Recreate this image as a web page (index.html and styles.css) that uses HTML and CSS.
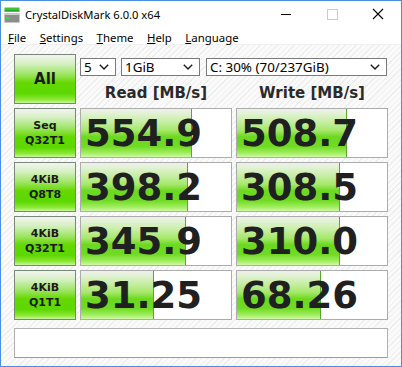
FILE: index.html
```html
<!DOCTYPE html>
<html>
<head>
<meta charset="utf-8">
<link rel="stylesheet" href="styles.css">
</head>
<body>
<div class="window">
  <div class="titlebar">
    <svg class="appicon" width="16" height="16" viewBox="0 0 16 16">
      <rect x="0.5" y="0.5" width="15" height="4" fill="#3ec23e"/>
      <rect x="0.5" y="3.5" width="15" height="1" fill="#1f8a1f"/>
      <rect x="0.5" y="6.5" width="15" height="9" fill="#8a8f8c"/>
      <rect x="0.5" y="6.5" width="15" height="1.5" fill="#c9cccb"/>
      <rect x="2" y="10" width="4" height="2" fill="#46d246"/>
    </svg>
    <span class="title">CrystalDiskMark 6.0.0 x64</span>
    <div class="winctl">
      <svg class="ctl" width="46" height="29" viewBox="0 0 46 29"><rect x="18" y="13" width="10" height="1" fill="#000"/></svg>
      <svg class="ctl" width="46" height="29" viewBox="0 0 46 29"><rect x="18.5" y="8.5" width="10" height="10" fill="none" stroke="#cccccc"/></svg>
      <svg class="ctl" width="46" height="29" viewBox="0 0 46 29"><path d="M18 8 L28 18 M28 8 L18 18" stroke="#000" stroke-width="1.1"/></svg>
    </div>
  </div>
  <div class="menubar">
    <span class="mi"><u>F</u>ile</span>
    <span class="mi"><u>S</u>ettings</span>
    <span class="mi"><u>T</u>heme</span>
    <span class="mi"><u>H</u>elp</span>
    <span class="mi"><u>L</u>anguage</span>
  </div>
  <div class="content">
    <div class="grid">
      <div class="btn all">All</div>
      <div class="controls">
        <div class="combos">
          <div class="combo c1"><span>5</span><svg width="10" height="6" viewBox="0 0 10 6"><path d="M0.8 0.8 L5 5 L9.2 0.8" fill="none" stroke="#1a1a1a" stroke-width="1.4"/></svg></div>
          <div class="combo c2"><span>1GiB</span><svg width="10" height="6" viewBox="0 0 10 6"><path d="M0.8 0.8 L5 5 L9.2 0.8" fill="none" stroke="#1a1a1a" stroke-width="1.4"/></svg></div>
          <div class="combo c3"><span>C: 30% (70/237GiB)</span><svg width="10" height="6" viewBox="0 0 10 6"><path d="M0.8 0.8 L5 5 L9.2 0.8" fill="none" stroke="#1a1a1a" stroke-width="1.4"/></svg></div>
        </div>
        <div class="heads">
          <div class="head">Read [MB/s]</div>
          <div class="head">Write [MB/s]</div>
        </div>
      </div>

      <div class="btn lbl">Seq<br>Q32T1</div>
      <div class="cell"><div class="bar" style="width:111px"></div><span class="num">554.9</span></div>
      <div class="cell"><div class="bar" style="width:110px"></div><span class="num">508.7</span></div>

      <div class="btn lbl">4KiB<br>Q8T8</div>
      <div class="cell"><div class="bar" style="width:107px"></div><span class="num">398.2</span></div>
      <div class="cell"><div class="bar" style="width:103px"></div><span class="num">308.5</span></div>

      <div class="btn lbl">4KiB<br>Q32T1</div>
      <div class="cell"><div class="bar" style="width:105px"></div><span class="num">345.9</span></div>
      <div class="cell"><div class="bar" style="width:103px"></div><span class="num">310.0</span></div>

      <div class="btn lbl">4KiB<br>Q1T1</div>
      <div class="cell"><div class="bar" style="width:73px"></div><span class="num">31.25</span></div>
      <div class="cell"><div class="bar" style="width:84px"></div><span class="num">68.26</span></div>
    </div>
    <div class="comment"></div>
  </div>
</div>
</body>
</html>
```

FILE: styles.css
```css
* { box-sizing: border-box; }
html, body { margin: 0; padding: 0; }
body { width: 402px; height: 367px; overflow: hidden; background: #fff; }

.window {
  width: 402px;
  height: 367px;
  border: 1px solid #4a90e2;
  display: flex;
  flex-direction: column;
  background: #fff;
}

.titlebar {
  height: 29px;
  display: flex;
  align-items: center;
  background: #fff;
  font-family: "Noto Sans", sans-serif;
  font-size: 11.2px;
  color: #000;
}
.appicon { margin-left: 3px; margin-top: -1px; }
.title { margin-left: 5px; margin-top: -2px; }
.winctl { margin-left: auto; display: flex; align-self: flex-start; }
.ctl { display: block; }

.menubar {
  height: 15px;
  display: flex;
  align-items: center;
  gap: 13.5px;
  padding-left: 7px;
  font-family: "Noto Sans", sans-serif;
  font-size: 11.4px;
  color: #000;
  background: #fff;
  border-bottom: 1px solid #f0f0f0;
}
.mi u { text-decoration: underline; text-underline-offset: 1px; }

.content {
  flex: 1;
  padding: 9px 13px 7px 13px;
  background-color: #fafafa;
  background-image: repeating-linear-gradient(135deg, #fafafa 0px, #fafafa 3px, #eeeeee 3px, #eeeeee 4px);
  display: flex;
  flex-direction: column;
  gap: 8px;
}

.grid {
  display: grid;
  grid-template-columns: 62px 152px 152px;
  grid-auto-rows: 50px;
  column-gap: 4px;
  row-gap: 4px;
}

.btn {
  border: 1px solid #788878;
  background: linear-gradient(to bottom, #f2f4f0 0%, #d6f0c2 18%, #98e45a 42%, #64d800 58%, #5cd800 80%, #8ee838 93%, #c8f8a0 100%);
  display: flex;
  align-items: center;
  justify-content: center;
  text-align: center;
  font-family: "DejaVu Sans", sans-serif;
  font-weight: bold;
  color: #1a1a1a;
}
.all { font-size: 15px; }
.lbl { font-size: 11px; line-height: 15px; }

.controls { grid-column: 2 / span 2; display: flex; flex-direction: column; }
.combos { display: flex; margin-top: 4px; height: 18px; }
.combo {
  height: 18px;
  border: 1px solid #7a7a7a;
  background: #fff;
  display: flex;
  align-items: center;
  justify-content: space-between;
  padding: 0 6px 0 3px;
  font-family: "Noto Sans", sans-serif;
  font-size: 13.4px;
  color: #000;
}
.c1 { width: 36px; }
.c2 { width: 79px; margin-left: 5px; }
.c3 { width: 181px; margin-left: 6px; }
.combo svg { display: block; }

.heads { display: flex; gap: 4px; margin-top: 7px; }
.head {
  width: 152px;
  height: 20px;
  line-height: 20px;
  text-align: center;
  font-family: "DejaVu Sans", sans-serif;
  font-weight: bold;
  font-size: 15px;
  color: #2a2a2a;
}

.cell {
  position: relative;
  border: 1px solid #acacac;
  background: #fff;
  overflow: hidden;
}
.bar {
  height: 100%;
  border-right: 1px solid #5aa830;
  background: linear-gradient(to bottom, #eef0ec 0%, #e4f2d8 8%, #c4eea0 28%, #a4e868 45%, #6cd820 58%, #70da24 78%, #a2ee60 92%, #d0f8a8 100%);
}
.num {
  position: absolute;
  left: 4px;
  top: 0;
  bottom: 0;
  display: flex;
  align-items: center;
  font-family: "DejaVu Sans", sans-serif;
  font-weight: bold;
  font-size: 37px;
  color: #202020;
}

.comment {
  height: 30px;
  width: 374px;
  border: 1px solid #b0b0b0;
  border-bottom-color: #9a9a9a;
  background: #fff;
}
```
